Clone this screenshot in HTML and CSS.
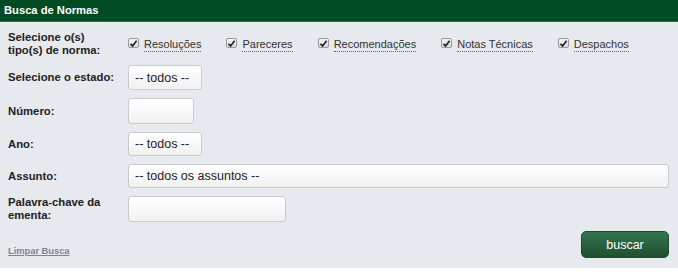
FILE: index.html
```html
<!DOCTYPE html>
<html lang="pt">
<head>
<meta charset="utf-8">
<title>Busca de Normas</title>
<link rel="stylesheet" href="styles.css">
</head>
<body>
<div class="panel">
  <div class="header">Busca de Normas</div>
  <form class="form">
    <div class="row row-top">
      <label class="lbl">Selecione o(s)<br>tipo(s) de norma:</label>
      <div class="checks">
        <span class="chk"><span class="box"><svg viewBox="0 0 9 9" width="9" height="9"><path d="M1.5 4.8 L3.6 6.9 L7.6 1.8" fill="none" stroke="#222" stroke-width="1.7"/></svg></span><span class="chk-text">Resoluções</span></span>
        <span class="chk"><span class="box"><svg viewBox="0 0 9 9" width="9" height="9"><path d="M1.5 4.8 L3.6 6.9 L7.6 1.8" fill="none" stroke="#222" stroke-width="1.7"/></svg></span><span class="chk-text">Pareceres</span></span>
        <span class="chk"><span class="box"><svg viewBox="0 0 9 9" width="9" height="9"><path d="M1.5 4.8 L3.6 6.9 L7.6 1.8" fill="none" stroke="#222" stroke-width="1.7"/></svg></span><span class="chk-text">Recomendações</span></span>
        <span class="chk"><span class="box"><svg viewBox="0 0 9 9" width="9" height="9"><path d="M1.5 4.8 L3.6 6.9 L7.6 1.8" fill="none" stroke="#222" stroke-width="1.7"/></svg></span><span class="chk-text">Notas Técnicas</span></span>
        <span class="chk"><span class="box"><svg viewBox="0 0 9 9" width="9" height="9"><path d="M1.5 4.8 L3.6 6.9 L7.6 1.8" fill="none" stroke="#222" stroke-width="1.7"/></svg></span><span class="chk-text">Despachos</span></span>
      </div>
    </div>
    <div class="row">
      <label class="lbl">Selecione o estado:</label>
      <div class="ctrl sel sel-short">-- todos --</div>
    </div>
    <div class="row">
      <label class="lbl">Número:</label>
      <div class="ctrl inp inp-num"></div>
    </div>
    <div class="row">
      <label class="lbl">Ano:</label>
      <div class="ctrl sel sel-short sel-ano">-- todos --</div>
    </div>
    <div class="row">
      <label class="lbl">Assunto:</label>
      <div class="ctrl sel sel-wide">-- todos os assuntos --</div>
    </div>
    <div class="row row-top">
      <label class="lbl">Palavra-chave da<br>ementa:</label>
      <div class="ctrl inp inp-key"></div>
    </div>
    <div class="footer">
      <a class="clear" href="#">Limpar Busca</a>
      <button type="button" class="btn">buscar</button>
    </div>
  </form>
</div>
</body>
</html>
```

FILE: styles.css
```css
html, body {
  margin: 0;
  padding: 0;
  background: #ffffff;
}
body {
  width: 678px;
  font-family: "Liberation Sans", Arial, sans-serif;
  color: #222;
}
.panel {
  background: #e6e9ed;
  height: 268px;
  box-sizing: border-box;
}
.header {
  background: #004b22;
  color: #ffffff;
  font-weight: bold;
  font-size: 11.2px;
  line-height: 21px;
  height: 21px;
  padding-left: 4px;
  border-bottom: 1px solid #3d6b4c;
}
.form {
  padding: 9px 9px 0 8px;
}
.row {
  display: grid;
  grid-template-columns: 120px 1fr;
  align-items: center;
  margin-bottom: 8px;
}
.row-top {
  min-height: 26px;
}
.lbl {
  font-weight: bold;
  font-size: 11.3px;
  line-height: 13px;
  color: #222;
}
.checks {
  display: flex;
  align-items: center;
  gap: 25px;
  padding-top: 1px;
}
.chk {
  display: inline-flex;
  align-items: center;
  gap: 5px;
  white-space: nowrap;
}
.box {
  width: 9px;
  height: 8px;
  border: 1px solid #9a9a9a;
  border-radius: 2px;
  background: linear-gradient(#f6f6f6, #d9d9d9);
  display: inline-flex;
  align-items: center;
  justify-content: center;
  margin-top: -3px;
}
.box svg {
  display: block;
}
.chk-text {
  font-size: 11px;
  line-height: 14px;
  color: #333;
  border-bottom: 1px dotted #666;
}
.ctrl {
  box-sizing: border-box;
  border: 1px solid #c9cccf;
  border-radius: 3px;
  background: linear-gradient(#ffffff, #f1f1f1);
  font-size: 12.5px;
  color: #222;
  display: flex;
  align-items: center;
  padding-left: 6px;
}
.sel-short {
  width: 74px;
  height: 25px;
}
.sel-ano {
  height: 24px;
}
.sel-wide {
  width: 541px;
  height: 24px;
}
.inp-num {
  width: 66px;
  height: 26px;
}
.inp-key {
  width: 158px;
  height: 26px;
}
.footer {
  display: flex;
  justify-content: space-between;
  align-items: flex-end;
  margin-top: 9px;
}
.clear {
  font-size: 9.3px;
  font-weight: bold;
  color: #7b8590;
  text-decoration: underline;
  margin-bottom: 1px;
  line-height: 12px;
}
.btn {
  width: 88px;
  height: 27px;
  border: 1px solid #1d4a2c;
  border-radius: 5px;
  background: linear-gradient(#367550, #1f4f2f);
  color: #ffffff;
  font-family: "Liberation Sans", Arial, sans-serif;
  font-size: 12.5px;
  padding: 0;
  cursor: pointer;
}
```
